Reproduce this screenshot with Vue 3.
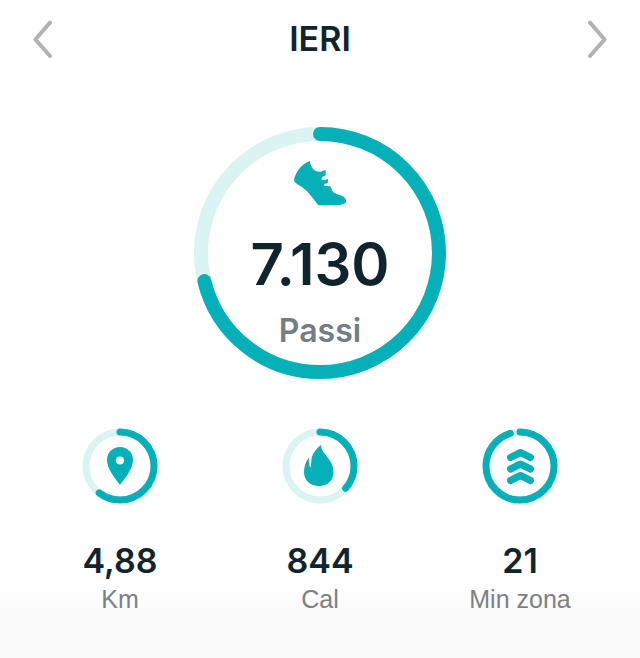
<script setup>
const goal = { label: 'Passi', value: '7.130', percent: 71.2 }

const stats = [
  { id: 'distance', label: 'Km', value: '4,88', percent: 60.5 },
  { id: 'calories', label: 'Cal', value: '844', percent: 36.4 },
  { id: 'zone', label: 'Min zona', value: '21', percent: 95.4 }
]
</script>

<template>
  <main class="screen">
    <header class="header">
      <button class="nav" type="button" aria-label="Giorno precedente">
        <svg width="20" height="40" viewBox="0 0 20 40"><path d="M18 3.500L3.500 20.500L18 37" /></svg>
      </button>
      <h1 class="title">IERI</h1>
      <button class="nav" type="button" aria-label="Giorno successivo">
        <svg width="20" height="40" viewBox="0 0 20 40"><path d="M2 3.500L16.500 20.500L2 37" /></svg>
      </button>
    </header>

    <section class="goal">
      <svg class="ring" viewBox="0 0 252 252" aria-hidden="true">
        <circle class="track" cx="126" cy="126" r="119" />
        <circle
          class="progress" cx="126" cy="126" r="119" pathLength="100"
          :stroke-dasharray="`${goal.percent} 100`" transform="rotate(-90 126 126)"
        />
      </svg>
      <div class="goal-content">
        <svg class="shoe" width="54" height="46" viewBox="0 0 162 138" aria-hidden="true">
          <path d="M50 3C29 10 8 34 3 60C3 68 15 73 28 82C45 94 60 115 76 136H118C140 136 157 133 159 125C160 114 152 109 140 105C127 102 119 98 117 91L112 79C106 78 95 80 93 76C93 70 101 72 105 67V58C98 56 94 62 87 60C84 57 86 53 89 50C93 47 97 48 98 44V31C91 29 89 34 82 35C65 36 54 25 50 3Z" />
        </svg>
        <strong class="goal-value">{{ goal.value }}</strong>
        <span class="goal-label">{{ goal.label }}</span>
      </div>
    </section>

    <section class="stats">
      <article v-for="stat in stats" :key="stat.id" class="stat">
        <svg class="stat-ring" width="76" height="76" viewBox="0 0 76 76" aria-hidden="true">
          <circle class="track" cx="38" cy="38" r="34" />
          <circle
            class="progress" cx="38" cy="38" r="34" pathLength="100"
            :stroke-dasharray="`${stat.percent} 100`" transform="rotate(-90 38 38)"
          />
          <path
            v-if="stat.id === 'distance'" class="glyph" fill-rule="evenodd"
            d="M38 19C30.500 19 25 24.500 25 32C25 41 33 50 38 57C43 50 51 41 51 32C51 24.500 45.500 19 38 19ZM38 28.500A4 4 0 1 1 38 36.500A4 4 0 1 1 38 28.500Z"
          />
          <path
            v-else-if="stat.id === 'calories'" class="glyph"
            d="M39 17C39 26 51.500 31 51.500 44C51.500 52 46 58 37 58C28 58 22 52 22 44C22 38 24 33 27 29.500C26.500 34 27 37.500 28.500 39.500C29.500 38 29 35 29.500 31C30.500 25.500 34 21 39 17Z"
          />
          <path
            v-else class="chevrons"
            d="M28.500 29.500L38.500 24.500L48.500 29.500M28.500 41L38.500 36L48.500 41M28.500 52.500L38.500 47.500L48.500 52.500"
          />
        </svg>
        <strong class="stat-value">{{ stat.value }}</strong>
        <span class="stat-label">{{ stat.label }}</span>
      </article>
    </section>
  </main>
</template>

<style>
body {
  margin: 0;
  background: #fafafa;
}
</style>

<style scoped>
.screen {
  box-sizing: border-box;
  min-height: 100vh;
  background: linear-gradient(to bottom, #fff 580px, #fafafa 620px);
  color: #10242e;
  font-family: "Liberation Sans", Arial, sans-serif;
}

.header {
  display: flex;
  align-items: center;
  justify-content: space-between;
  height: 78px;
  padding: 0 32px;
}

.nav {
  display: flex;
  padding: 0;
  border: 0;
  background: none;
  cursor: pointer;
}

.nav path {
  fill: none;
  stroke: #b2b2b2;
  stroke-width: 4;
  stroke-linecap: round;
  stroke-linejoin: round;
}

.title,
.goal-value,
.goal-label,
.stat-value {
  font-family: Inter, "Liberation Sans", sans-serif;
  font-weight: 600;
}

.title {
  margin: 0;
  font-size: 34px;
  line-height: 40px;
}

.goal {
  display: grid;
  justify-content: center;
  grid-template-columns: 252px;
  margin-top: 49px;
}

.ring,
.goal-content {
  grid-area: 1 / 1;
}

.track,
.progress {
  fill: none;
  stroke: #daf3f3;
  stroke-width: 14;
}

.progress {
  stroke: #05b0b8;
  stroke-linecap: round;
}

.stat-ring .track,
.stat-ring .progress {
  stroke-width: 7;
}

.goal-content {
  display: flex;
  flex-direction: column;
  align-items: center;
  padding-top: 33px;
}

.shoe,
.glyph {
  fill: #05b0b8;
}

.goal-value {
  margin-top: 24px;
  font-size: 58px;
  line-height: 68px;
}

.goal-label {
  margin-top: 13px;
  color: #727e85;
  font-size: 32px;
  line-height: 40px;
}

.stats {
  display: grid;
  grid-template-columns: repeat(3, 1fr);
  margin-top: 49px;
  padding: 0 20px;
}

.stat {
  display: flex;
  flex-direction: column;
  align-items: center;
}

.chevrons {
  fill: none;
  stroke: #05b0b8;
  stroke-width: 7;
  stroke-linecap: round;
  stroke-linejoin: round;
}

.stat-value {
  margin-top: 37px;
  font-size: 34px;
  line-height: 40px;
}

.stat-label {
  margin-top: 3px;
  color: #7b8184;
  font-size: 25px;
  line-height: 30px;
}
</style>
